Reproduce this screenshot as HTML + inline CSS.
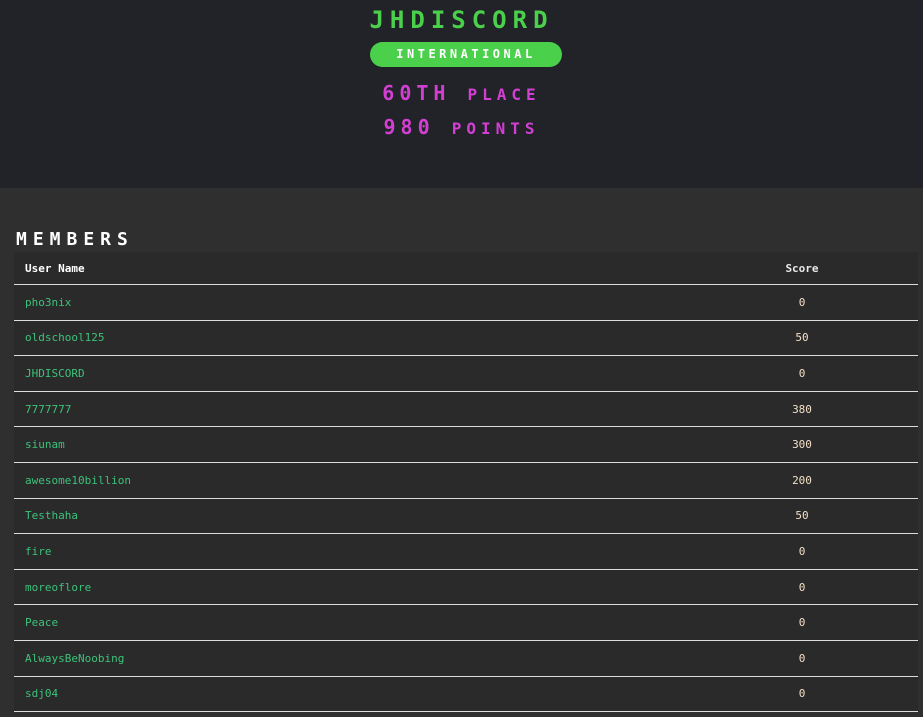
<!DOCTYPE html>
<html><head><style>
body{margin:0;background:#2f2f2f;width:923px;height:717px;overflow:hidden;font-family:"DejaVu Sans Mono","Liberation Mono",monospace;}
.hdr{height:188px;background:#212328;text-align:center;position:relative}
.t{position:absolute;left:0;right:0;font-weight:bold;letter-spacing:6px}
.title{top:6px;color:#4bd04b;font-size:24px}
.pill{position:absolute;left:370px;top:42px;width:192px;height:25px;border-radius:13px;background:#4bd04b;color:#fff;font-size:12px;font-weight:bold;letter-spacing:3.5px;line-height:25px;text-align:center}
.p1{top:81px;color:#d23fd2;font-size:20px;letter-spacing:5px}
.p2{top:115px;color:#d23fd2;font-size:20px;letter-spacing:5px}
.sm{font-size:16px}
h2{position:absolute;left:16px;top:229px;margin:0;color:#fff;font-size:18px;letter-spacing:6px;font-weight:bold}
table{position:absolute;left:14px;top:252px;width:904px;border-collapse:collapse;background:#2a2a2a;font-size:11px}
th{color:#fff;height:32px;text-align:left;padding:0 11px;border-bottom:1px solid #ddd;font-weight:bold}
td{height:34.6px;padding:0 11px;border-bottom:1px solid #ddd;color:#3cc27a}
td.s,th.s{text-align:center;width:210px;color:#e8e8e8}
td.s{color:#f2e0c8}
</style></head><body>
<div class="hdr">
<div class="t title">JHDISCORD</div>
<div class="pill">INTERNATIONAL</div>
<div class="t p1">60TH <span class="sm">PLACE</span></div>
<div class="t p2">980 <span class="sm">POINTS</span></div>
</div>
<h2>MEMBERS</h2>
<table>
<tr><th>User Name</th><th class="s">Score</th></tr>
<tr><td>pho3nix</td><td class="s">0</td></tr>
<tr><td>oldschool125</td><td class="s">50</td></tr>
<tr><td>JHDISCORD</td><td class="s">0</td></tr>
<tr><td>7777777</td><td class="s">380</td></tr>
<tr><td>siunam</td><td class="s">300</td></tr>
<tr><td>awesome10billion</td><td class="s">200</td></tr>
<tr><td>Testhaha</td><td class="s">50</td></tr>
<tr><td>fire</td><td class="s">0</td></tr>
<tr><td>moreoflore</td><td class="s">0</td></tr>
<tr><td>Peace</td><td class="s">0</td></tr>
<tr><td>AlwaysBeNoobing</td><td class="s">0</td></tr>
<tr><td>sdj04</td><td class="s">0</td></tr>
</table>
</body></html>
